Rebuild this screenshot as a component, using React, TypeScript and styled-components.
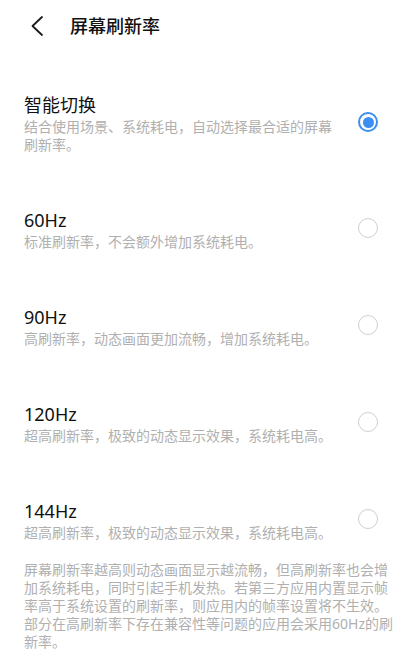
import React from "react";
import styled, { createGlobalStyle } from "styled-components";

const Global = createGlobalStyle`
  html, body { margin: 0; padding: 0; background: #ffffff; }
  body { font-family: "Noto Sans", "Noto Sans CJK SC", sans-serif; -webkit-font-smoothing: antialiased; }
  * { box-sizing: border-box; }
`;

const Page = styled.div`
  width: 417px;
  min-height: 652px;
  background: #ffffff;
  display: flex;
  flex-direction: column;
`;

const Header = styled.header`
  height: 52px;
  display: flex;
  align-items: center;
  padding-left: 24px;
`;

const BackButton = styled.button`
  width: 24px;
  height: 24px;
  padding: 0;
  border: none;
  background: none;
  display: flex;
  align-items: center;
  justify-content: center;
  cursor: pointer;
`;

const Title = styled.h1`
  margin: 0 0 0 22px;
  font-size: 18px;
  font-weight: 500;
  color: #111111;
  line-height: 24px;
`;

const List = styled.div`
  display: flex;
  flex-direction: column;
  gap: 54px;
  padding: 41px 39px 0 24px;
`;

const Item = styled.label`
  display: flex;
  align-items: center;
  cursor: pointer;
`;

const Texts = styled.div`
  flex: 1;
  min-width: 0;
  display: flex;
  flex-direction: column;
  gap: 1px;
`;

const ItemTitle = styled.div`
  font-size: 18px;
  line-height: 24px;
  color: #111111;
  font-weight: 400;
`;

const Desc = styled.div`
  font-size: 14px;
  line-height: 18px;
  color: #b0b0b0;
`;

const Radio = styled.span<{ $checked: boolean }>`
  flex: none;
  margin-left: 24px;
  margin-top: -3px;
  width: 20px;
  height: 20px;
  border-radius: 50%;
  border: ${(p) => (p.$checked ? "2px solid #3b8ef2" : "1.5px solid #cfcfcf")};
  display: flex;
  align-items: center;
  justify-content: center;
  &::after {
    content: "";
    display: ${(p) => (p.$checked ? "block" : "none")};
    width: 11px;
    height: 11px;
    border-radius: 50%;
    background: #3b8ef2;
  }
`;

const Footer = styled.p`
  margin: 19px 0 0;
  padding: 0 20px 0 24px;
  font-size: 14px;
  line-height: 18px;
  color: #b0b0b0;
`;

const options = [
  { title: "智能切换", desc: "结合使用场景、系统耗电，自动选择最合适的屏幕刷新率。", checked: true },
  { title: "60Hz", desc: "标准刷新率，不会额外增加系统耗电。", checked: false },
  { title: "90Hz", desc: "高刷新率，动态画面更加流畅，增加系统耗电。", checked: false },
  { title: "120Hz", desc: "超高刷新率，极致的动态显示效果，系统耗电高。", checked: false },
  { title: "144Hz", desc: "超高刷新率，极致的动态显示效果，系统耗电高。", checked: false },
];

export default function App() {
  return (
    <Page>
      <Global />
      <Header>
        <BackButton aria-label="返回">
          <svg width="24" height="24" viewBox="0 0 24 24" fill="none">
            <path d="M18 3 L8.5 12 L18 21" stroke="#1a1a1a" strokeWidth="1.8" strokeLinecap="round" strokeLinejoin="round" />
          </svg>
        </BackButton>
        <Title>屏幕刷新率</Title>
      </Header>
      <List>
        {options.map((o) => (
          <Item key={o.title}>
            <Texts>
              <ItemTitle>{o.title}</ItemTitle>
              <Desc>{o.desc}</Desc>
            </Texts>
            <Radio $checked={o.checked} />
          </Item>
        ))}
      </List>
      <Footer>
        屏幕刷新率越高则动态画面显示越流畅，但高刷新率也会增加系统耗电，同时引起手机发热。若第三方应用内置显示帧率高于系统设置的刷新率，则应用内的帧率设置将不生效。部分在高刷新率下存在兼容性等问题的应用会采用60Hz的刷新率。
      </Footer>
    </Page>
  );
}
